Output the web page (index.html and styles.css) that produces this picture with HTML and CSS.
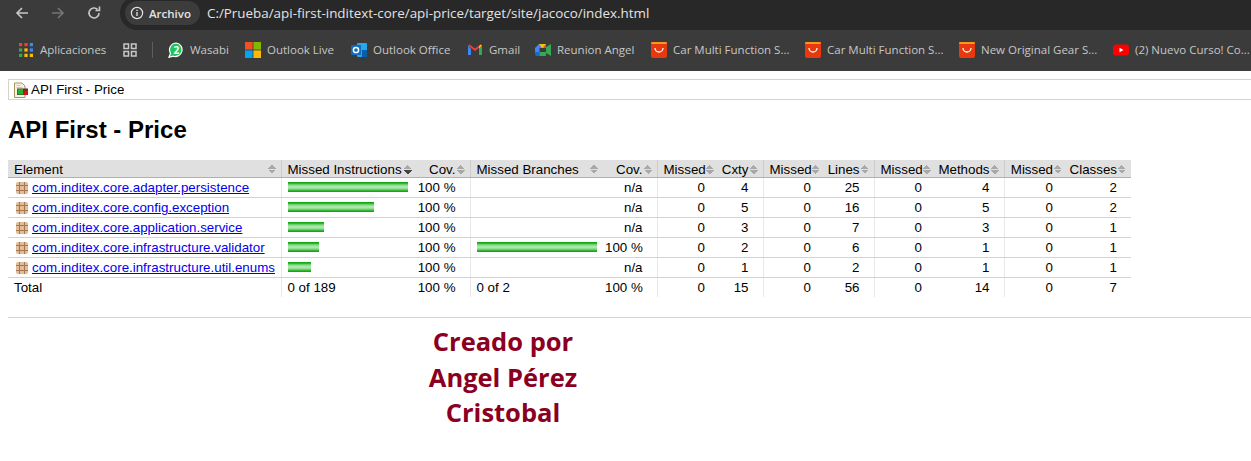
FILE: index.html
```html
<!DOCTYPE html>
<html lang="es">
<head>
  <meta charset="UTF-8" />
  <title>API First - Price</title>
  <link rel="stylesheet" href="styles.css">
</head>
<body>
  <header class="chrome">
    <div class="toolbar">
      <svg class="nav-icon" viewBox="0 0 16 16"><path d="M14 8H3M8 3 3 8l5 5" fill="none" stroke="#c7c7c7" stroke-width="1.6"/></svg>
      <svg class="nav-icon" viewBox="0 0 16 16"><path d="M2 8h11M8 3l5 5-5 5" fill="none" stroke="#757575" stroke-width="1.6"/></svg>
      <svg class="nav-icon" viewBox="0 0 16 16"><path d="M13 8a5 5 0 1 1-1.5-3.6M13.5 1.5v4h-4" fill="none" stroke="#c7c7c7" stroke-width="1.6"/></svg>
      <div class="omnibox">
        <div class="chip">
          <svg class="info" viewBox="0 0 14 14"><circle cx="7" cy="7" r="5.6" fill="none" stroke="#e3e3e3" stroke-width="1.2"/><path d="M7 6v4M7 3.8v1.2" stroke="#e3e3e3" stroke-width="1.3"/></svg>
          <span>Archivo</span>
        </div>
        <span class="url">C:/Prueba/api-first-inditext-core/api-price/target/site/jacoco/index.html</span>
      </div>
    </div>
    <nav class="bookmarks">
      <a class="bm bm-apps">
        <svg viewBox="0 0 13 13"><g>
          <rect x="0" y="0" width="3" height="3" fill="#ea4335"/><rect x="5" y="0" width="3" height="3" fill="#ea4335"/><rect x="10" y="0" width="3" height="3" fill="#4285f4"/>
          <rect x="0" y="5" width="3" height="3" fill="#34a853"/><rect x="5" y="5" width="3" height="3" fill="#fbbc05"/><rect x="10" y="5" width="3" height="3" fill="#4285f4"/>
          <rect x="0" y="10" width="3" height="3" fill="#34a853"/><rect x="5" y="10" width="3" height="3" fill="#fbbc05"/><rect x="10" y="10" width="3" height="3" fill="#fbbc05"/>
        </g></svg>
        Aplicaciones
      </a>
      <a class="bm bm-tabs">
        <svg viewBox="0 0 14 14" fill="none" stroke="#c7c7c7" stroke-width="1.5"><rect x="1" y="1" width="4.5" height="4.5"/><rect x="8.5" y="1" width="4.5" height="4.5"/><rect x="1" y="8.5" width="4.5" height="4.5"/><rect x="8.5" y="8.5" width="4.5" height="4.5"/></svg>
      </a>
      <span class="sep"></span>
      <a class="bm bm-wa">
        <svg viewBox="0 0 16 16"><path d="M8.300 1A6.800 6.800 0 0 0 2.500 11.300L1 15.300l4.200-1.100A6.800 6.800 0 1 0 8.300 1z" fill="#1fc45c" stroke="#fff" stroke-width="1.200"/><text x="8.300" y="11.500" class="wa-num">2</text></svg>
        Wasabi
      </a>
      <a class="bm bm-ms">
        <svg viewBox="0 0 16 16"><rect width="7.600" height="7.600" fill="#f25022"/><rect x="8.400" width="7.600" height="7.600" fill="#7fba00"/><rect y="8.400" width="7.600" height="7.600" fill="#00a4ef"/><rect x="8.400" y="8.400" width="7.600" height="7.600" fill="#ffb900"/></svg>
        Outlook Live
      </a>
      <a class="bm bm-ol">
        <svg viewBox="0 0 16 16"><rect x="6" y="1" width="10" height="14" rx="1" fill="#28a8ea"/><rect x="11" y="8" width="5" height="7" fill="#0a5ea8"/><rect y="3" width="10" height="10" rx="1" fill="#0f6cbd"/><circle cx="5" cy="8" r="2.600" fill="none" stroke="#fff" stroke-width="1.500"/></svg>
        Outlook Office
      </a>
      <a class="bm bm-gm">
        <svg viewBox="0 0 16 16"><path d="M1 3.500V13h3V7z" fill="#4285f4"/><path d="M15 3.500V13h-3V7z" fill="#34a853"/><path d="M1 3.500 8 9l7-5.500-1.500-1L8 6.500 2.500 2.500z" fill="#ea4335"/><path d="M12 7V4.200l1.500-1.700L15 3.500z" fill="#fbbc05"/></svg>
        Gmail
      </a>
      <a class="bm bm-meet">
        <svg viewBox="0 0 16 16"><path d="M4 2h7v4H4.500v4H0V6z" fill="#4285f4"/><path d="M4 2h7v4H7z" fill="#fbbc05"/><path d="M0 10h4.500v4H2a2 2 0 0 1-2-2z" fill="#1967d2"/><path d="M4.500 10H11v4H4.500z" fill="#34a853"/><path d="M11 5l5-3v12l-5-3z" fill="#34a853"/><path d="M11 2v4H8z" fill="#ea4335"/></svg>
        Reunion Angel
      </a>
      <a class="bm bm-ali">
        <svg viewBox="0 0 16 16"><rect width="16" height="16" rx="2" fill="#e8380d"/><rect width="16" height="2" rx="1" fill="#f59a1b"/><path d="M4 6a4 4 0 0 0 8 0" fill="none" stroke="#fff" stroke-width="1.300"/></svg>
        Car Multi Function S...
      </a>
      <a class="bm bm-ali">
        <svg viewBox="0 0 16 16"><rect width="16" height="16" rx="2" fill="#e8380d"/><rect width="16" height="2" rx="1" fill="#f59a1b"/><path d="M4 6a4 4 0 0 0 8 0" fill="none" stroke="#fff" stroke-width="1.300"/></svg>
        Car Multi Function S...
      </a>
      <a class="bm bm-ali">
        <svg viewBox="0 0 16 16"><rect width="16" height="16" rx="2" fill="#e8380d"/><rect width="16" height="2" rx="1" fill="#f59a1b"/><path d="M4 6a4 4 0 0 0 8 0" fill="none" stroke="#fff" stroke-width="1.300"/></svg>
        New Original Gear S...
      </a>
      <a class="bm bm-yt">
        <svg viewBox="0 0 16 16"><rect y="2.500" width="16" height="11" rx="3" fill="#f00"/><path d="M6.500 5.700v4.600L10.500 8z" fill="#fff"/></svg>
        (2) Nuevo Curso! Co...
      </a>
    </nav>
  </header>

  <main class="report">
    <div class="breadcrumb">
      <svg class="session-icon" viewBox="0 0 16 16"><path d="M.5 1h7.500l3 3v11.500H.5z" fill="#f6f2e2" stroke="#a8925f"/><path d="M2.500 3.500h4M2.500 5.500h6" stroke="#cfc8b0"/><rect x="3" y="6.500" width="11" height="6.500" fill="#4a3a2a"/><rect x="3.500" y="7" width="5.500" height="5.500" fill="#28b028"/><rect x="9" y="8.500" width="5" height="4.500" fill="#c8141c"/></svg>API First - Price
    </div>
    <h1>API First - Price</h1>

    <table class="coverage">
      <colgroup>
        <col class="c-el"><col class="c-bar"><col class="c-cov1"><col class="c-bar2"><col class="c-cov2">
        <col class="c-m"><col class="c-cxty"><col class="c-m"><col class="c-lines"><col class="c-m">
        <col class="c-methods"><col class="c-m2"><col class="c-classes">
      </colgroup>
      <thead>
        <tr>
          <td class="sort">Element</td>
          <td class="bar sort down">Missed Instructions</td>
          <td class="ctr2 sort">Cov.</td>
          <td class="bar sort">Missed Branches</td>
          <td class="ctr2 sort">Cov.</td>
          <td class="ctr1 sort">Missed</td>
          <td class="ctr2 sort">Cxty</td>
          <td class="ctr1 sort">Missed</td>
          <td class="ctr2 sort">Lines</td>
          <td class="ctr1 sort">Missed</td>
          <td class="ctr2 sort">Methods</td>
          <td class="ctr1 sort">Missed</td>
          <td class="ctr2 sort">Classes</td>
        </tr>
      </thead>
      <tbody>
        <tr>
          <td><span class="pkg"></span><a href="#">com.inditex.core.adapter.persistence</a></td>
          <td class="bar"><span class="fill w-120"></span></td><td class="ctr2">100 %</td>
          <td class="bar"></td><td class="ctr2">n/a</td>
          <td class="ctr1">0</td><td class="ctr2">4</td><td class="ctr1">0</td><td class="ctr2">25</td>
          <td class="ctr1">0</td><td class="ctr2">4</td><td class="ctr1">0</td><td class="ctr2">2</td>
        </tr>
        <tr>
          <td><span class="pkg"></span><a href="#">com.inditex.core.config.exception</a></td>
          <td class="bar"><span class="fill w-86"></span></td><td class="ctr2">100 %</td>
          <td class="bar"></td><td class="ctr2">n/a</td>
          <td class="ctr1">0</td><td class="ctr2">5</td><td class="ctr1">0</td><td class="ctr2">16</td>
          <td class="ctr1">0</td><td class="ctr2">5</td><td class="ctr1">0</td><td class="ctr2">2</td>
        </tr>
        <tr>
          <td><span class="pkg"></span><a href="#">com.inditex.core.application.service</a></td>
          <td class="bar"><span class="fill w-36"></span></td><td class="ctr2">100 %</td>
          <td class="bar"></td><td class="ctr2">n/a</td>
          <td class="ctr1">0</td><td class="ctr2">3</td><td class="ctr1">0</td><td class="ctr2">7</td>
          <td class="ctr1">0</td><td class="ctr2">3</td><td class="ctr1">0</td><td class="ctr2">1</td>
        </tr>
        <tr>
          <td><span class="pkg"></span><a href="#">com.inditex.core.infrastructure.validator</a></td>
          <td class="bar"><span class="fill w-31"></span></td><td class="ctr2">100 %</td>
          <td class="bar"><span class="fill w-120"></span></td><td class="ctr2">100 %</td>
          <td class="ctr1">0</td><td class="ctr2">2</td><td class="ctr1">0</td><td class="ctr2">6</td>
          <td class="ctr1">0</td><td class="ctr2">1</td><td class="ctr1">0</td><td class="ctr2">1</td>
        </tr>
        <tr>
          <td><span class="pkg"></span><a href="#">com.inditex.core.infrastructure.util.enums</a></td>
          <td class="bar"><span class="fill w-23"></span></td><td class="ctr2">100 %</td>
          <td class="bar"></td><td class="ctr2">n/a</td>
          <td class="ctr1">0</td><td class="ctr2">1</td><td class="ctr1">0</td><td class="ctr2">2</td>
          <td class="ctr1">0</td><td class="ctr2">1</td><td class="ctr1">0</td><td class="ctr2">1</td>
        </tr>
      </tbody>
      <tfoot>
        <tr>
          <td>Total</td>
          <td class="bar">0 of 189</td><td class="ctr2">100 %</td>
          <td class="bar">0 of 2</td><td class="ctr2">100 %</td>
          <td class="ctr1">0</td><td class="ctr2">15</td><td class="ctr1">0</td><td class="ctr2">56</td>
          <td class="ctr1">0</td><td class="ctr2">14</td><td class="ctr1">0</td><td class="ctr2">7</td>
        </tr>
      </tfoot>
    </table>

    <hr class="footer-rule">
    <p class="credit">Creado por<br>Angel Pérez<br>Cristobal</p>
  </main>
</body>
</html>
```

FILE: styles.css
```css
html, body {
  margin: 0;
  padding: 0;
  background-color: #fff;
  overflow: hidden;
}

/* browser window */
.chrome {
  background-color: #3b3b3b;
  font-family: 'Open Sans', 'Noto Sans', sans-serif;
  height: 71px;
}

.toolbar {
  display: flex;
  align-items: center;
  box-sizing: border-box;
  height: 30px;
  padding: 0 0 4px 14px;
}

.nav-icon {
  width: 16px;
  height: 16px;
  margin-right: 20px;
}

.omnibox {
  display: flex;
  align-items: center;
  flex: 1;
  height: 34px;
  margin-left: -2px;
  padding-left: 5px;
  background-color: #282828;
  border-radius: 17px 0 0 17px;
}

.chip {
  display: flex;
  align-items: center;
  gap: 5px;
  height: 24px;
  padding: 0 9px 0 5px;
  background-color: #3c3c3c;
  border-radius: 12px;
  color: #e3e3e3;
  font-size: 11.5px;
  font-weight: 600;
}

.info {
  width: 14px;
  height: 14px;
}

.url {
  margin-left: 7px;
  color: #e3e3e3;
  font-size: 13.4px;
  white-space: nowrap;
}

.bookmarks {
  display: flex;
  align-items: center;
  height: 39px;
  padding-left: 19px;
  color: #c7c7c7;
  font-size: 11.5px;
  white-space: nowrap;
  overflow: hidden;
}

.bm {
  display: flex;
  align-items: center;
  flex: none;
  gap: 6px;
}

.bm svg {
  flex: none;
  width: 16px;
  height: 16px;
}

.bm-apps svg,
.bm-tabs svg {
  width: 14px;
  height: 14px;
}

.bm-apps { width: 104px; gap: 7px; }
.bm-tabs { width: 26px; }
.sep {
  flex: none;
  width: 1px;
  height: 16px;
  margin: 0 15px 0 3px;
  background-color: #5e5e5e;
}
.bm-wa { width: 77px; }
.bm-ms { width: 106px; }
.bm-ol { width: 116px; }
.bm-gm { width: 68px; }
.bm-meet { width: 116px; }
.bm-ali { width: 154px; }
.bm-yt { width: 130px; }

.wa-num {
  fill: #fff;
  font-family: 'Open Sans', sans-serif;
  font-size: 10px;
  font-weight: 700;
  text-anchor: middle;
}

/* jacoco report */
.report {
  padding: 8px 0 0 8px;
  font-family: 'Liberation Sans', Arial, sans-serif;
  font-size: 13.33px;
  color: #000;
}

.breadcrumb {
  display: flex;
  align-items: center;
  height: 19px;
  border: 1px solid #d6d3ce;
  border-right: none;
  padding-left: 5px;
}

.session-icon {
  flex: none;
  width: 16px;
  height: 16px;
  margin-right: 1px;
}

h1 {
  margin: 16px 0 16px;
  font-size: 24px;
  line-height: 28px;
  font-weight: bold;
}

table.coverage {
  table-layout: fixed;
  width: 1123px;
  border-collapse: collapse;
  empty-cells: show;
}

.c-el { width: 273px; }
.c-bar { width: 133px; }
.c-cov1 { width: 56px; }
.c-bar2 { width: 133px; }
.c-cov2 { width: 54px; }
.c-m { width: 62px; }
.c-cxty { width: 44px; }
.c-lines { width: 49px; }
.c-methods { width: 68px; }
.c-m2 { width: 63px; }
.c-classes { width: 64px; }

.coverage td {
  height: 15px;
  padding: 2px 6px;
  line-height: 15px;
  white-space: nowrap;
}

.coverage thead {
  background-color: #e0e0e0;
}

.coverage thead td {
  height: 15px;
  padding: 2px 14px 0 6px;
  border-bottom: 1px solid #b0b0b0;
}

.coverage thead td.ctr2 { padding-left: 2px; }

.coverage tbody td {
  border-bottom: 1px solid #d6d3ce;
}

.coverage tbody .bar {
  vertical-align: top;
}

.coverage .bar {
  border-left: 1px solid #e8e8e8;
}

.coverage thead .bar,
.coverage thead .ctr1 {
  border-left: 1px solid #ccc;
}

.coverage .ctr1 {
  text-align: right;
  padding-right: 14px;
  border-left: 1px solid #e8e8e8;
}

.coverage .ctr2 {
  text-align: right;
  padding-left: 2px;
  padding-right: 14px;
}

.coverage a {
  color: #00e;
}

.sort {
  position: relative;
}

/* sort arrows: up and down triangle pair */
.sort::after {
  content: "";
  position: absolute;
  right: 5px;
  top: 5px;
  width: 8px;
  height: 9px;
  background:
    linear-gradient(to bottom right, transparent 50%, #a8a8a8 50%) left top / 4px 4px no-repeat,
    linear-gradient(to bottom left, transparent 50%, #a8a8a8 50%) right top / 4px 4px no-repeat,
    linear-gradient(to top right, transparent 50%, #a8a8a8 50%) left bottom / 4px 4px no-repeat,
    linear-gradient(to top left, transparent 50%, #a8a8a8 50%) right bottom / 4px 4px no-repeat;
}

.sort.down::after {
  right: 2px;
  background:
    linear-gradient(to bottom right, transparent 50%, #a8a8a8 50%) left top / 4px 4px no-repeat,
    linear-gradient(to bottom left, transparent 50%, #a8a8a8 50%) right top / 4px 4px no-repeat,
    linear-gradient(to top right, transparent 50%, #444 50%) left bottom / 4px 4px no-repeat,
    linear-gradient(to top left, transparent 50%, #444 50%) right bottom / 4px 4px no-repeat;
}

.pkg {
  display: inline-block;
  width: 12px;
  height: 12px;
  margin: 0 4px 0 2px;
  vertical-align: -2px;
  border-radius: 2px;
  background:
    linear-gradient(#a67850, #a67850) 0 3px / 100% 1px no-repeat,
    linear-gradient(#a67850, #a67850) 0 8px / 100% 1px no-repeat,
    linear-gradient(#a67850, #a67850) 3px 0 / 1px 100% no-repeat,
    linear-gradient(#a67850, #a67850) 8px 0 / 1px 100% no-repeat,
    #e0bc98;
}

.fill {
  display: block;
  height: 10px;
  margin-top: 2px;
  background: linear-gradient(#14a814 0, #14a814 10%, #7ed67e 28%, #b8ecb8 50%, #7ed67e 72%, #14a814 90%, #14a814 100%);
}

.w-120 { width: 120px; }
.w-86 { width: 86px; }
.w-36 { width: 36px; }
.w-31 { width: 31px; }
.w-23 { width: 23px; }

.footer-rule {
  width: 1243px;
  height: 1px;
  margin: 20px 0 0;
  border: none;
  background-color: #d6d3ce;
}

.credit {
  width: 250px;
  margin: 6px 0 0 370px;
  color: #8b0020;
  font-family: 'Open Sans', 'Noto Sans', sans-serif;
  font-size: 25.5px;
  font-weight: 700;
  line-height: 35.500px;
  text-align: center;
}
```
